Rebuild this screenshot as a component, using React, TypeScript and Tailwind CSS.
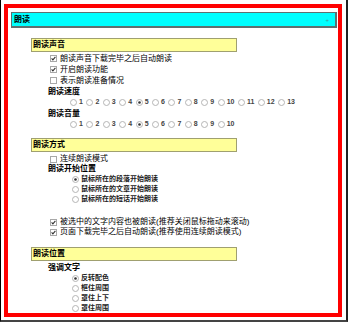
const font = "font-['Liberation_Sans','Noto_Sans_CJK_SC',sans-serif]";

function Check({ on }: { on?: boolean }) {
  return (
    <svg width="7" height="7" viewBox="0 0 7 7" className="shrink-0">
      <rect x="0.5" y="0.5" width="6" height="6" fill="#fff" stroke="#a8a8a8" />
      {on && <path d="M1.6 3.4 L2.9 4.8 L5.4 1.8" fill="none" stroke="#333" strokeWidth="1.1" />}
    </svg>
  );
}

function Radio({ on }: { on?: boolean }) {
  return (
    <svg width="7" height="7" viewBox="0 0 7 7" className="shrink-0">
      <circle cx="3.5" cy="3.5" r="3" fill="#fff" stroke="#b4b4b4" />
      {on && <circle cx="3.5" cy="3.5" r="1.3" fill="#333" />}
    </svg>
  );
}

function Bar({ title }: { title: string }) {
  return (
    <div className="flex h-[14px] w-[206px] items-center border border-[#a0a070] bg-[#ffff99] pl-[1px] text-[8px] font-bold text-black">
      {title}
    </div>
  );
}

function CheckRow({ label, on, h = "h-[10px]" }: { label: string; on?: boolean; h?: string }) {
  return (
    <div className={`flex items-center gap-[3px] pl-[19px] text-[8px] text-black ${h}`}>
      <Check on={on} />
      <span>{label}</span>
    </div>
  );
}

function SubHead({ label, h = "h-[10px]" }: { label: string; h?: string }) {
  return <div className={`flex items-center pl-[17px] text-[8px] font-bold text-black ${h}`}>{label}</div>;
}

function Scale({ count, sel }: { count: number; sel: number }) {
  return (
    <div className="flex h-[11px] items-center pl-[39px]">
      {Array.from({ length: count }, (_, i) => i + 1).map((n) => (
        <div key={n} className="mr-[3.5px] flex items-center">
          <Radio on={n === sel} />
          <span className="ml-[2px] text-[7px] font-bold text-[#444]">{n}</span>
        </div>
      ))}
    </div>
  );
}

function Option({ label, on }: { label: string; on?: boolean }) {
  return (
    <div className="flex h-[10px] items-center gap-[2px] pl-[41px]">
      <Radio on={on} />
      <span className="text-[7px] font-bold text-[#222]">{label}</span>
    </div>
  );
}

export default function App() {
  return (
    <div className={`h-[322px] w-[348px] border-b-2 border-l border-r-2 border-b-[#444] border-l-black border-r-[#222] bg-white pl-[3px] pr-[4px] pt-[4px] ${font}`}>
      <div className="h-[313px] overflow-hidden border-4 border-[#ff0000] bg-white">
        <div className="ml-[3px] mr-[1px] mt-[4px] flex h-[16px] items-center justify-between border border-b-2 border-r-2 border-[#5f7070] bg-[#00ffff] pl-[2px] pr-[6px]">
          <span className="text-[8px] font-bold text-black">朗读</span>
          <span className="text-[6px] leading-none text-[#3a9a9a]">+</span>
        </div>

        <div className="ml-[23px]">
          <div className="mt-[10px]">
            <Bar title="朗读声音" />
            <div className="mt-[1px]">
              <CheckRow label="朗读声音下载完毕之后自动朗读" on h="h-[11px]" />
              <CheckRow label="开启朗读功能" on h="h-[11px]" />
              <CheckRow label="表示朗读准备情况" h="h-[11px]" />
              <SubHead label="朗读速度" h="h-[11px]" />
              <Scale count={13} sel={5} />
              <SubHead label="朗读音量" h="h-[11px]" />
              <Scale count={10} sel={5} />
            </div>
          </div>

          <div className="mt-[8px]">
            <Bar title="朗读方式" />
            <div className="mt-[2px]">
              <CheckRow label="连续朗读模式" />
              <SubHead label="朗读开始位置" />
              <Option label="鼠标所在的段落开始朗读" on />
              <Option label="鼠标所在的文章开始朗读" />
              <Option label="鼠标所在的短话开始朗读" />
            </div>
            <div className="mt-[13px]">
              <CheckRow label="被选中的文字内容也被朗读(推荐关闭鼠标拖动来滚动)" on />
              <CheckRow label="页面下载完毕之后自动朗读(推荐使用连续朗读模式)" on />
            </div>
          </div>

          <div className="mt-[10px]">
            <Bar title="朗读位置" />
            <div className="mt-[2px]">
              <SubHead label="强调文字" />
              <Option label="反转配色" on />
              <Option label="框住周围" />
              <Option label="罩住上下" />
              <Option label="罩住周围" />
            </div>
          </div>
        </div>
      </div>
    </div>
  );
}
